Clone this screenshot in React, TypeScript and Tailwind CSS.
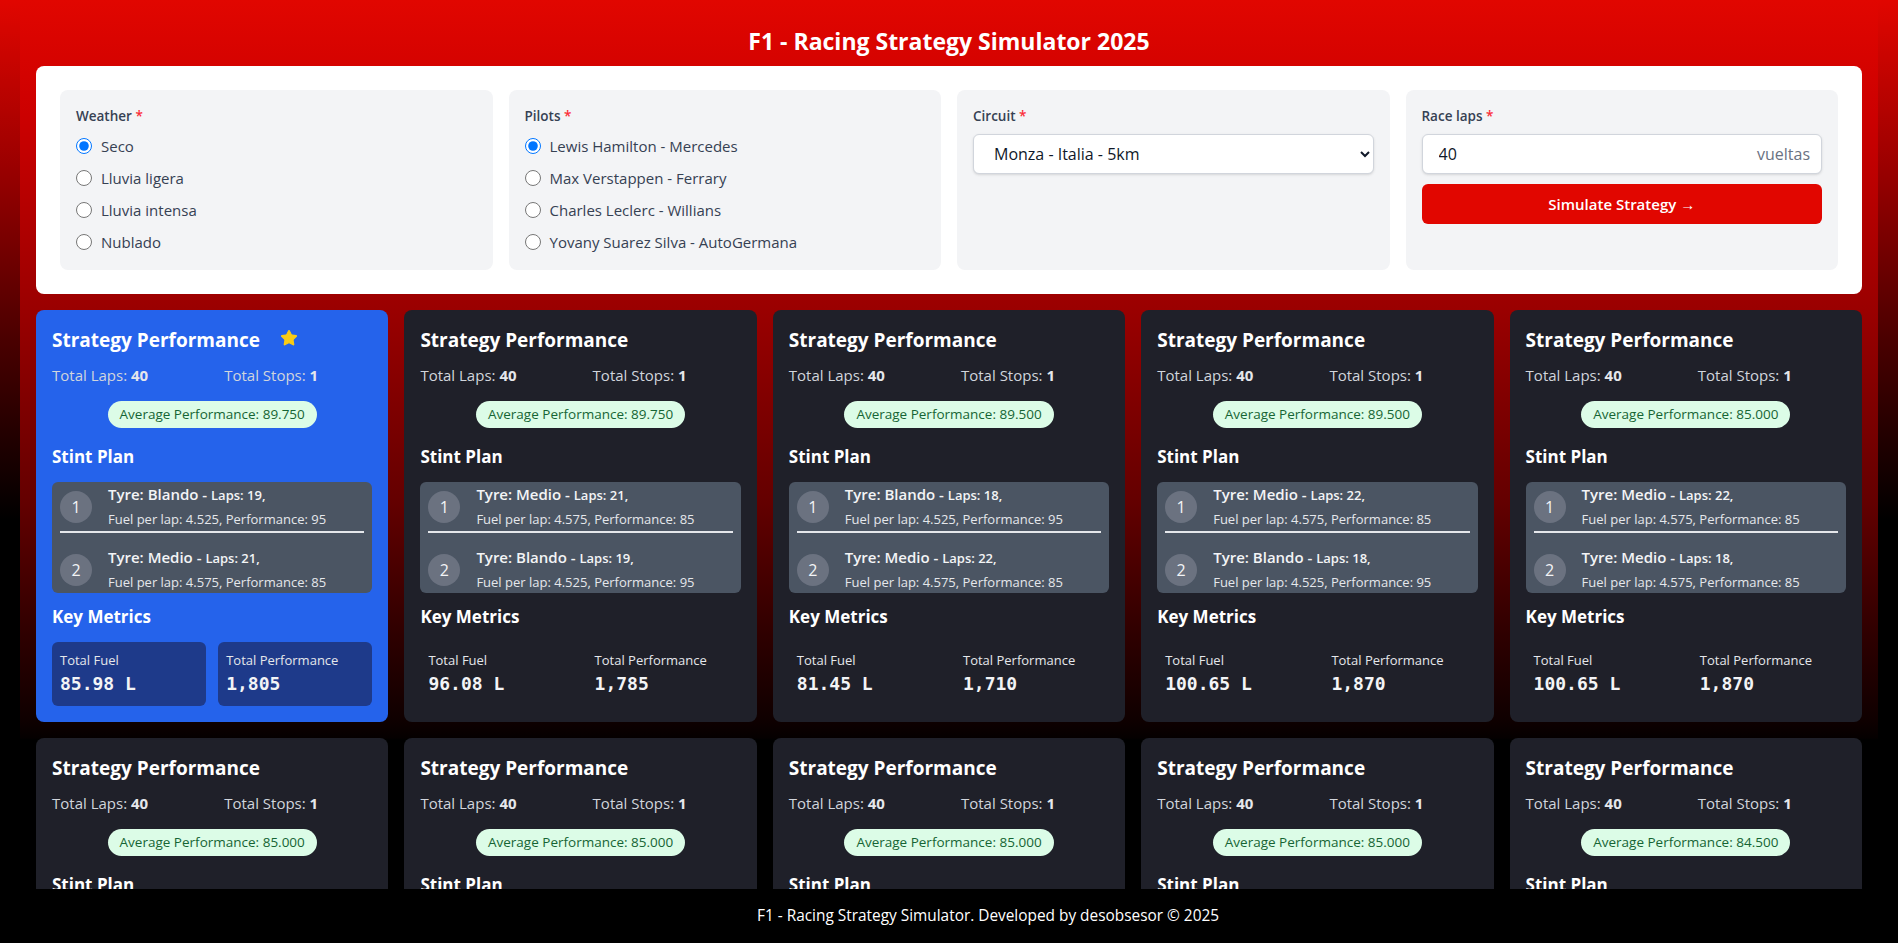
import { Star } from "lucide-react";

type Stint = { tyre: string; laps: number; fuel: string; perf: number };
type Strategy = { avg: string; stints: Stint[]; fuel: string; total: string; best?: boolean };

const blando = (laps: number): Stint => ({ tyre: "Blando", laps, fuel: "4.525", perf: 95 });
const medio = (laps: number): Stint => ({ tyre: "Medio", laps, fuel: "4.575", perf: 85 });

const strategies: Strategy[] = [
  { avg: "89.750", stints: [blando(19), medio(21)], fuel: "85.98 L", total: "1,805", best: true },
  { avg: "89.750", stints: [medio(21), blando(19)], fuel: "96.08 L", total: "1,785" },
  { avg: "89.500", stints: [blando(18), medio(22)], fuel: "81.45 L", total: "1,710" },
  { avg: "89.500", stints: [medio(22), blando(18)], fuel: "100.65 L", total: "1,870" },
  { avg: "85.000", stints: [medio(22), medio(18)], fuel: "100.65 L", total: "1,870" },
  { avg: "85.000", stints: [medio(18), medio(22)], fuel: "100.65 L", total: "1,870" },
  { avg: "85.000", stints: [medio(21), medio(19)], fuel: "100.65 L", total: "1,870" },
  { avg: "85.000", stints: [medio(19), medio(21)], fuel: "100.65 L", total: "1,870" },
  { avg: "85.000", stints: [medio(20), medio(20)], fuel: "100.65 L", total: "1,870" },
  { avg: "84.500", stints: [medio(23), medio(17)], fuel: "100.65 L", total: "1,870" },
];

const weathers = ["Seco", "Lluvia ligera", "Lluvia intensa", "Nublado"];
const pilots = [
  "Lewis Hamilton - Mercedes",
  "Max Verstappen - Ferrary",
  "Charles Leclerc - Willians",
  "Yovany Suarez Silva - AutoGermana",
];

function Label({ text }: { text: string }) {
  return (
    <p className="text-[13.5px] leading-5 font-semibold text-gray-700">
      {text} <span className="text-red-500">*</span>
    </p>
  );
}

function RadioGroup({ name, items }: { name: string; items: string[] }) {
  return (
    <div className="mt-2 flex flex-col gap-2">
      {items.map((item, i) => (
        <label key={item} className="flex items-center gap-[9px] h-6 text-[15px] text-gray-700">
          <input type="radio" name={name} defaultChecked={i === 0} className="w-4 h-4 m-0 accent-[#0075ff]" />
          {item}
        </label>
      ))}
    </div>
  );
}

function StrategyCard({ s }: { s: Strategy }) {
  return (
    <div className={`rounded-lg p-4 text-white ${s.best ? "bg-[#2563eb]" : "bg-[#1f2029]"}`}>
      {/* HEADER */}
      <div className="flex items-center gap-5 h-7">
        <h3 className="text-[19px] leading-7 font-bold">Strategy Performance</h3>
        {s.best && <Star className="w-[18px] h-[18px] -mt-1 text-[#facc15] fill-[#facc15]" strokeWidth={1.5} />}
      </div>

      <div className="mt-[9px] grid grid-cols-2 gap-6 text-[15px] leading-6 text-gray-300">
        <p>
          Total Laps: <span className="font-bold text-gray-200">40</span>
        </p>
        <p>
          Total Stops: <span className="font-bold text-gray-200">1</span>
        </p>
      </div>

      <div className="mt-[14px] flex justify-center">
        <span className="h-[27px] flex items-center px-3 rounded-full bg-[#dcfce7] text-[#166534] text-[13.5px] font-medium">
          Average Performance: {s.avg}
        </span>
      </div>

      {/* STINTS */}
      <h4 className="mt-[15px] text-[17px] leading-7 font-bold">Stint Plan</h4>
      <div className="mt-[11px] h-[111px] overflow-hidden rounded-md bg-[#4b5563] px-2">
        {s.stints.map((st, i) => (
          <div key={i} className={`flex items-center gap-4 border-b-2 border-gray-200 ${i > 0 ? "mt-3" : ""}`}>
            <div className="w-8 h-8 shrink-0 rounded-full bg-[#6b7280] flex items-center justify-center text-base text-gray-100">
              {i + 1}
            </div>
            <div>
              <p className="leading-6 text-[15px] font-semibold text-gray-100">
                Tyre: {st.tyre} - <span className="text-[13px]">Laps: {st.laps},</span>
              </p>
              <p className="pt-[2px] pb-[2px] leading-5 text-[13px] text-gray-200">
                Fuel per lap: {st.fuel}, Performance: {st.perf}
              </p>
            </div>
          </div>
        ))}
      </div>

      {/* METRICS */}
      <h4 className="mt-[10px] text-[17px] leading-7 font-bold">Key Metrics</h4>
      <div className="mt-[11px] grid grid-cols-2 gap-3">
        {[
          ["Total Fuel", s.fuel],
          ["Total Performance", s.total],
        ].map(([k, v]) => (
          <div key={k} className={`h-16 rounded-md px-2 pt-2 ${s.best ? "bg-[#1e3a8a]" : ""}`}>
            <p className="text-[13px] leading-5 text-gray-200">{k}</p>
            <p className="text-lg leading-7 font-bold font-['DejaVu_Sans_Mono',monospace] text-gray-100">{v}</p>
          </div>
        ))}
      </div>
    </div>
  );
}

export default function App() {
  return (
    <div className="h-screen flex flex-col font-['Open_Sans','Noto_Sans',sans-serif] bg-black">
      <main className="flex-1 overflow-hidden bg-[linear-gradient(to_bottom,#e10600_0px,#990000_170px,#4a0000_340px,#000_520px)]">
        <div className="mx-5 px-4 pt-[27px] pb-10 bg-[linear-gradient(to_bottom,#e10600_0px,#cc0000_115px,#9a0000_310px,#640000_500px,#300000_631px,#100000_717px,#050000_738px,#000_740px)]">
          <h1 className="text-center text-[23px] leading-7 font-bold text-white">F1 - Racing Strategy Simulator 2025</h1>

          {/* FORM PANEL */}
          <div className="mt-[11px] bg-white rounded-lg p-6 grid grid-cols-4 gap-4">
            <div className="bg-gray-100 rounded-lg p-4">
              <Label text="Weather" />
              <RadioGroup name="weather" items={weathers} />
            </div>

            <div className="bg-gray-100 rounded-lg p-4">
              <Label text="Pilots" />
              <RadioGroup name="pilot" items={pilots} />
            </div>

            <div className="bg-gray-100 rounded-lg p-4">
              <Label text="Circuit" />
              <select
                defaultValue="monza"
                className="mt-2 w-full h-10 rounded-md border border-gray-300 bg-white px-4 text-base text-gray-900 shadow-sm"
              >
                <option value="monza">Monza - Italia - 5km</option>
                <option value="silverstone">Silverstone - UK - 5.8km</option>
              </select>
            </div>

            <div className="bg-gray-100 rounded-lg p-4">
              <Label text="Race laps" />
              <div className="relative mt-2">
                <input
                  type="text"
                  defaultValue="40"
                  className="w-full h-10 rounded-md border border-gray-300 bg-white px-4 text-base text-gray-900 shadow-sm"
                />
                <span className="absolute right-3 top-0 h-10 flex items-center text-base text-gray-500">vueltas</span>
              </div>
              <button
                type="button"
                className="mt-[10px] w-full h-10 rounded-md bg-[#e10600] text-white text-[15px] font-semibold"
              >
                Simulate Strategy →
              </button>
            </div>
          </div>

          {/* RESULTS */}
          <div className="mt-4 grid grid-cols-5 gap-4">
            {strategies.map((s, i) => (
              <StrategyCard key={i} s={s} />
            ))}
          </div>
        </div>
      </main>

      <footer className="h-[54px] shrink-0 bg-black pl-[78px] flex items-center justify-center text-[15.4px] text-white">
        F1 - Racing Strategy Simulator. Developed by desobsesor © 2025
      </footer>
    </div>
  );
}
